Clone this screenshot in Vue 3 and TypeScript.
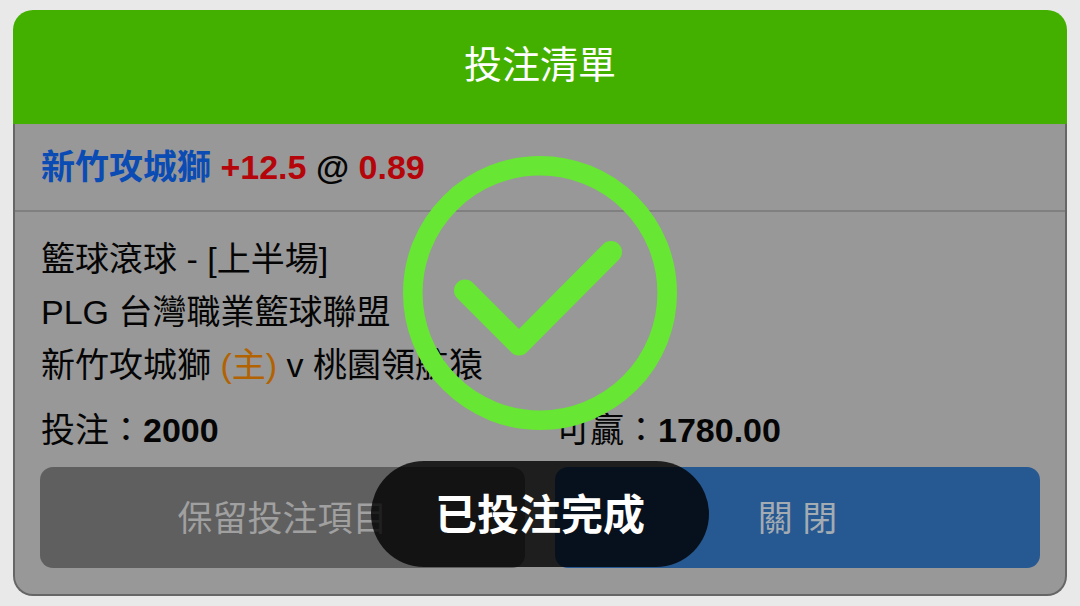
<script setup lang="ts">
interface Bet {
  team: string
  handicap: string
  odds: string
  market: string
  league: string
  opponent: string
  stake: string
  win: string
}

const bet: Bet = {
  team: '新竹攻城獅',
  handicap: '+12.5',
  odds: '0.89',
  market: '籃球滾球 - [上半場]',
  league: 'PLG 台灣職業籃球聯盟',
  opponent: '桃園領航猿',
  stake: '2000',
  win: '1780.00',
}
</script>

<template>
  <main class="slip" lang="zh-TW">
    <header class="slip-header">
      <h1>投注清單</h1>
    </header>
    <section class="slip-body">
      <h2 class="selection">
        <span class="team">{{ bet.team }}</span>
        <span class="figure">{{ ' ' + bet.handicap }}</span> @ <span class="figure">{{ bet.odds }}</span>
      </h2>
      <div class="details">
        <p>{{ bet.market }}</p>
        <p>{{ bet.league }}</p>
        <p>{{ bet.team }} <span class="home">(主)</span> v {{ bet.opponent }}</p>
        <div class="pair amounts">
          <p>投注：<strong>{{ bet.stake }}</strong></p>
          <p>可贏：<strong>{{ bet.win }}</strong></p>
        </div>
        <div class="pair">
          <button type="button" class="keep">保留投注項目</button>
          <button type="button" class="close">關 閉</button>
        </div>
      </div>
    </section>
    <div class="notice" role="status">
      <svg class="tick" viewBox="0 0 274 274" aria-hidden="true">
        <circle cx="137" cy="137" r="127.2" stroke-width="19.6" />
        <path d="M62 134.5 L116 188.5 L208 96" stroke-width="22" />
      </svg>
      <div class="toast">已投注完成</div>
    </div>
  </main>
</template>

<style>
body {
  margin: 0;
  background: #e9e9e9;
}
</style>

<style scoped>
.slip {
  position: relative;
  margin: 10px 13px;
  font-family: "Liberation Sans", "Noto Sans CJK TC", sans-serif;
  font-size: 34px;
  line-height: 53px;
  color: #050505;
}

h1,
h2,
p {
  margin: 0;
}

.slip-header {
  padding: 28px 0 32px;
  border-radius: 20px 20px 0 0;
  background: #43b000;
  color: #fff;
  text-align: center;
}

h1 {
  font-size: 38px;
  font-weight: 400;
  line-height: 54px;
}

.slip-body {
  border: 2px solid #666;
  border-top: 0;
  border-radius: 0 0 20px 20px;
  background: #989898;
}

.selection {
  padding: 17px 26px 16px;
  border-bottom: 2px solid #808080;
  font-size: 34px;
  font-weight: 700;
}

.team {
  color: #0a4bb4;
}

.figure {
  color: #b5050a;
}

.details {
  padding: 21px 25px 26px;
}

.details p {
  padding-left: 1px;
}

.home {
  color: #b36200;
}

.pair {
  display: grid;
  grid-template-columns: 1fr 1fr;
  gap: 30px;
}

.amounts {
  padding: 12px 0 10px;
}

button {
  height: 101px;
  padding: 0 0 4px;
  border: 0;
  border-radius: 13px;
  font-family: inherit;
  font-size: 35px;
}

.keep {
  background: #5f5f5f;
  color: #a0a0a0;
}

.close {
  background: #265891;
  color: #a3abb3;
}

.notice {
  position: absolute;
  inset: 0;
  display: flex;
  flex-direction: column;
  align-items: center;
  gap: 31px;
  padding-top: 146px;
}

.tick {
  flex: none;
  width: 274px;
  height: 274px;
  fill: none;
  stroke: #67e633;
  stroke-linecap: round;
  stroke-linejoin: round;
}

.toast {
  padding: 28px 64px 24px;
  border-radius: 53px;
  background: rgba(0, 0, 0, 0.8);
  color: #fff;
  font-size: 42px;
  font-weight: 700;
  line-height: 54px;
}
</style>
